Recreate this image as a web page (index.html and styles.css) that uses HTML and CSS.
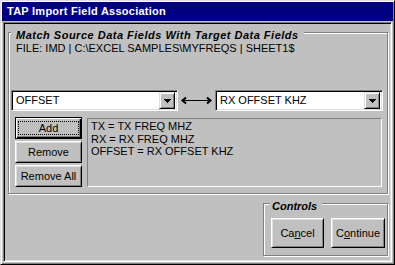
FILE: index.html
```html
<!DOCTYPE html>
<html lang="en">
<head>
    <meta charset="UTF-8">
    <title>TAP Import Field Association</title>
    <link rel="stylesheet" href="styles.css">
</head>
<body>
    <!-- dialog window -->
    <div class="window">
        <div class="titlebar">TAP Import Field Association</div>

        <div class="panel">
            <fieldset class="group match-group">
                <legend>Match Source Data Fields With Target Data Fields</legend>
                <div class="file-path">FILE: IMD | C:\EXCEL SAMPLES\MYFREQS | SHEET1$</div>

                <!-- source / target pick lists -->
                <div class="field-pair">
                    <div class="combo source">
                        <span class="combo-value">OFFSET</span>
                        <span class="combo-btn">
                            <svg width="7" height="4" viewBox="0 0 7 4"><path d="M0 0h7v1h-1v1h-1v1h-1v1h-1v-1h-1v-1h-1v-1h-1z" fill="#000"/></svg>
                        </span>
                    </div>
                    <svg class="link-arrow" width="37" height="21" viewBox="0 0 37 21">
                        <path d="M8 7.5 L4.5 10.5 L8 13.5" fill="none" stroke="#000" stroke-width="2"/>
                        <path d="M5 10.5 H32" fill="none" stroke="#000" stroke-width="1"/>
                        <path d="M29 7.5 L32.5 10.5 L29 13.5" fill="none" stroke="#000" stroke-width="2"/>
                    </svg>
                    <div class="combo target">
                        <span class="combo-value">RX OFFSET KHZ</span>
                        <span class="combo-btn">
                            <svg width="7" height="4" viewBox="0 0 7 4"><path d="M0 0h7v1h-1v1h-1v1h-1v1h-1v-1h-1v-1h-1v-1h-1z" fill="#000"/></svg>
                        </span>
                    </div>
                </div>

                <!-- add / remove and current mappings -->
                <div class="mapping">
                    <div class="actions">
                        <button class="btn default"><span class="focus">Add</span></button>
                        <button class="btn">Remove</button>
                        <button class="btn">Remove All</button>
                    </div>
                    <div class="mapping-list">
                        <div>TX = TX FREQ MHZ</div>
                        <div>RX = RX FREQ MHZ</div>
                        <div>OFFSET = RX OFFSET KHZ</div>
                    </div>
                </div>
            </fieldset>

            <div class="footer">
                <fieldset class="group controls-group">
                    <legend>Controls</legend>
                    <div class="controls">
                        <button class="btn wide cancel">Ca<u>n</u>cel</button>
                        <button class="btn wide continue">C<u>o</u>ntinue</button>
                    </div>
                </fieldset>
            </div>
        </div>
    </div>
</body>
</html>
```

FILE: styles.css
```css
/* win95 style dialog */
* {
    box-sizing: border-box;
}

body {
    margin: 0;
    background: #c0c0c0;
    font-family: "Liberation Sans", Arial, sans-serif;
    font-size: 11px;
    color: #000;
}

.window {
    width: 395px;
    height: 265px;
    display: flex;
    flex-direction: column;
    padding: 1px;
    border: 1px solid;
    border-color: #dfdfdf #000 #000 #dfdfdf;
    box-shadow: inset 1px 1px #fff, inset -1px -1px #808080;
}

.titlebar {
    height: 19px;
    line-height: 19px;
    padding-left: 5px;
    background: #000080;
    color: #fff;
    font-weight: bold;
    letter-spacing: 0.25px;
    white-space: nowrap;
}

/* sunken client area */
.panel {
    flex: 1;
    display: flex;
    flex-direction: column;
    margin: 1px 1px 1px;
    padding: 1px;
    border: 1px solid;
    border-color: #808080 #fff #fff #808080;
    box-shadow: inset 1px 1px #000, inset -1px -1px #dfdfdf;
}

/* etched group boxes */
.group {
    margin: 0;
    padding: 0;
    min-width: 0;
    border: 1px solid #808080;
    box-shadow: inset 1px 1px #fff, 1px 1px #fff;
}

.group legend {
    padding: 7px 5px 0;
    line-height: 13px;
    font-weight: bold;
    font-style: italic;
    white-space: nowrap;
    background: linear-gradient(#c0c0c0, #c0c0c0) 0 7px no-repeat;
}

.match-group {
    margin: -2px 2px 0 3px;
}

.match-group legend {
    margin-left: 2px;
    letter-spacing: 0.5px;
}

.file-path {
    margin-left: 7px;
    line-height: 13px;
    white-space: nowrap;
}

.field-pair {
    display: flex;
    align-items: center;
    margin: 35px 0 0 2px;
}

.combo {
    display: flex;
    align-items: center;
    height: 21px;
    padding: 2px;
    background: #fff;
    border: 1px solid;
    border-color: #808080 #fff #fff #808080;
    box-shadow: inset 1px 1px #000, inset -1px -1px #dfdfdf;
}

.combo.source {
    width: 167px;
}

.combo.target {
    width: 168px;
}

.combo-value {
    flex: 1;
    padding-left: 2px;
    line-height: 17px;
    white-space: nowrap;
}

.combo-btn {
    display: flex;
    align-items: center;
    justify-content: center;
    width: 16px;
    height: 17px;
    background: #c0c0c0;
    border: 1px solid;
    border-color: #dfdfdf #000 #000 #dfdfdf;
    box-shadow: inset 1px 1px #fff, inset -1px -1px #808080;
}

.link-arrow {
    display: block;
}

.mapping {
    display: flex;
    gap: 5px;
    margin: 6px 5px 6px 6px;
}

.actions {
    display: flex;
    flex-direction: column;
    gap: 2px;
}

.btn {
    width: 67px;
    height: 22px;
    padding: 0;
    font: inherit;
    color: #000;
    background: #c0c0c0;
    border: 1px solid;
    border-color: #fff #000 #000 #fff;
    box-shadow: inset 1px 1px #dfdfdf, inset -1px -1px #808080;
}

.btn.default {
    border-color: #000;
    box-shadow: inset 1px 1px #fff, inset -1px -1px #000, inset -2px -2px #808080;
}

.btn .focus {
    display: block;
    width: 61px;
    height: 14px;
    margin: auto;
    line-height: 12px;
    border: 1px dotted #000;
}

.mapping-list {
    flex: 1;
    height: 69px;
    margin-top: 1px;
    padding: 1px 0 0 3px;
    line-height: 12.5px;
    white-space: nowrap;
    border: 1px solid;
    border-color: #808080 #fff #fff #808080;
}

.footer {
    display: flex;
    justify-content: flex-end;
    margin: -1px 2px 0 0;
}

.controls-group legend {
    margin-left: 5px;
    padding: 7px 5px 0 3px;
}

.controls {
    display: flex;
    gap: 7px;
    padding: 5px 2px 7px 7px;
}

.btn.wide {
    height: 30px;
}

.btn.cancel {
    width: 53px;
}

.btn.continue {
    width: 54px;
}
```
